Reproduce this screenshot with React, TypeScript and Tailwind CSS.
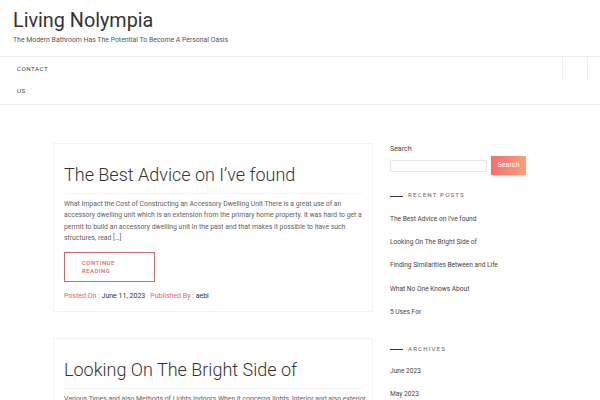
import React from 'react';

const recent = [
  'The Best Advice on I’ve found',
  'Looking On The Bright Side of',
  'Finding Similarities Between and Life',
  'What No One Knows About',
  '5 Uses For',
];

const archives = ['June 2023', 'May 2023'];

const posts = [
  {
    title: 'The Best Advice on I’ve found',
    excerpt:
      'What Impact the Cost of Constructing an Accessory Dwelling Unit There is a great use of an accessory dwelling unit which is an extension from the primary home property. it was hard to get a permit to build an accessory dwelling unit in the past and that makes it possible to have such structures, read […]',
    date: 'June 11, 2023',
    author: 'aebi',
  },
  {
    title: 'Looking On The Bright Side of',
    excerpt:
      'Various Types and also Methods of Lights Indoors When it concerns lights, interior and also exterior lights play a big role in the general look of a house and also its attributes. read […]',
    date: 'June 10, 2023',
    author: 'aebi',
  },
];

const WidgetTitle: React.FC<{ label: string }> = ({ label }) => (
  <div className="flex items-center gap-[5px] h-[12px]">
    <span className="w-[13px] h-px bg-[#333]" />
    <span className="text-[6.2px] tracking-[0.18em] text-[#666] uppercase">{label}</span>
  </div>
);

export default function App() {
  return (
    <div className="w-[600px] h-[400px] overflow-hidden bg-white text-[#333]" style={{ fontFamily: 'Roboto, "Liberation Sans", sans-serif' }}>
      {/* Header */}
      <header className="px-[13px] pt-[8px] h-[56px]">
        <h1 className="text-[19.8px] leading-[26px] text-[#333] font-normal">Living Nolympia</h1>
        <p className="text-[6.9px] leading-[10px] mt-[1px] text-[#555]">
          The Modern Bathroom Has The Potential To Become A Personal Oasis
        </p>
      </header>

      {/* Nav */}
      <nav className="border-t border-b border-[#eee] h-[49px] flex justify-between">
        <ul className="pl-[17px] text-[6.2px] tracking-[0.08em] text-[#444]">
          <li className="h-[23px] flex items-center pt-[2px]">CONTACT</li>
          <li className="h-[23px] flex items-center pt-[1px]">US</li>
        </ul>
        <div className="w-[26px] h-[24px] mr-[12px] border-l border-r border-[#eee]" />
      </nav>

      {/* Content */}
      <div className="flex gap-[17px] pl-[53px] pt-[38px]">
        <main className="w-[320px] flex flex-col gap-[26px]">
          {posts.map((post) => (
            <article key={post.title} className="border border-[#f3f3f3] pl-[10px] pr-[6px] pt-[18px] pb-[10px]">
              <h2 className="text-[18px] leading-[26px] font-light text-[#333] pb-[5px] border-b border-[#f3f3f3] mr-[4px]">
                {post.title}
              </h2>
              <p className="text-[6.85px] leading-[11.3px] text-[#616161] mt-[5px]">{post.excerpt}</p>
              <button className="mt-[8px] w-[91px] h-[30px] border-[1.5px] border-[#c46b6b] text-left pl-[17px] text-[5.8px] leading-[8px] tracking-[0.1em] text-[#c46b6b] font-medium">
                CONTINUE
                <br />
                READING
              </button>
              <div className="mt-[9px] text-[7px] leading-[10px] text-[#333] flex gap-[5px]">
                <span>
                  <span className="text-[#e2656a]">Posted On :</span> {post.date}
                </span>
                <span>
                  <span className="text-[#e2656a]">Published By :</span> {post.author}
                </span>
              </div>
            </article>
          ))}
        </main>

        <aside className="w-[136px] text-[6.6px] text-[#444]">
          <div className="h-[10px] flex items-center mt-[1px] text-[7px]">Search</div>
          <div className="flex items-center gap-[4px] mt-[2px]">
            <input className="w-[97px] h-[12px] border border-[#e5e5e5] rounded-[1px] outline-none" />
            <button className="w-[35px] h-[19px] text-white text-[7px] bg-gradient-to-r from-[#f56d6d] to-[#f8a07e] shadow-sm">
              Search
            </button>
          </div>

          <div className="mt-[15px]">
            <WidgetTitle label="Recent Posts" />
            <ul className="mt-[6px]">
              {recent.map((r) => (
                <li key={r} className="h-[23.3px] flex items-center">
                  {r}
                </li>
              ))}
            </ul>
          </div>

          <div className="mt-[19px]">
            <WidgetTitle label="Archives" />
            <ul className="mt-[5px]">
              {archives.map((a) => (
                <li key={a} className="h-[23.3px] flex items-center">
                  {a}
                </li>
              ))}
            </ul>
          </div>
        </aside>
      </div>
    </div>
  );
}
